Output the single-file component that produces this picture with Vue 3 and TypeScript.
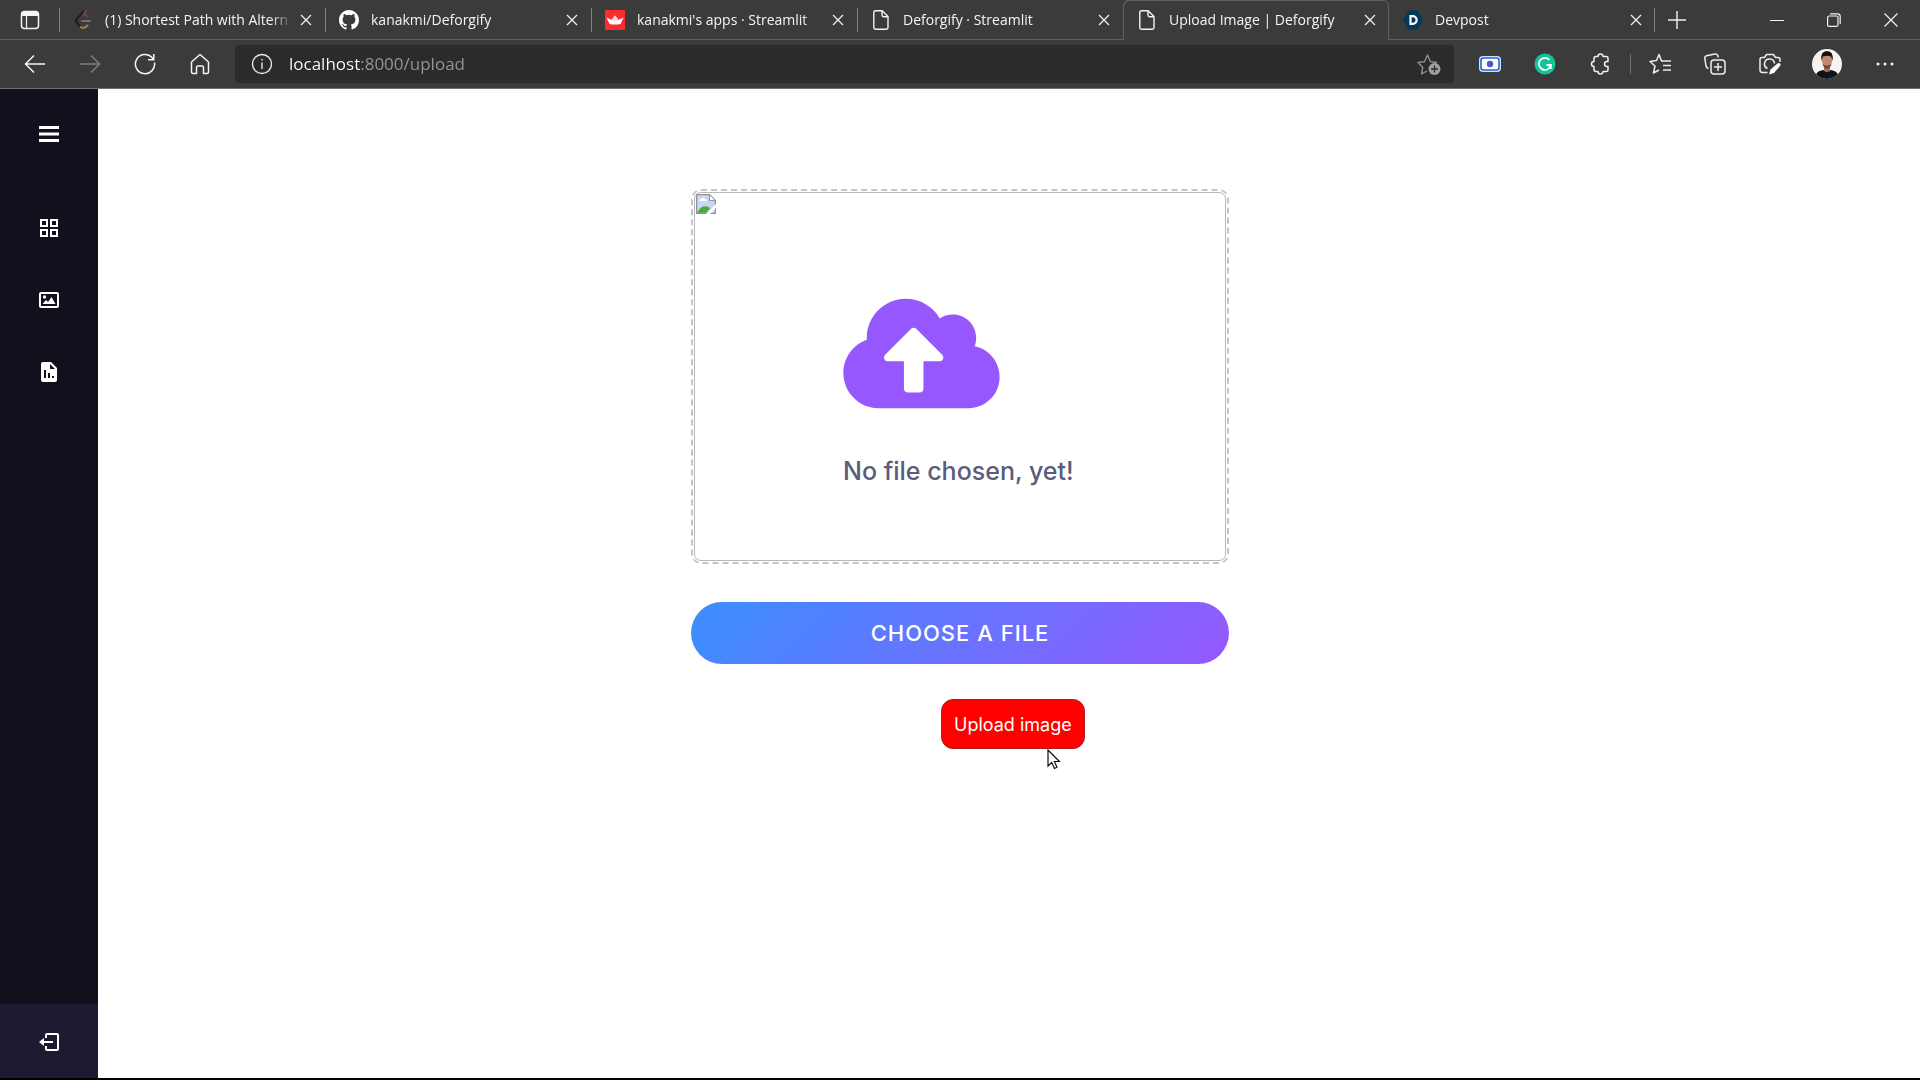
<script setup lang="ts">
interface Tab {
  title: string
  icon: 'leetcode' | 'github' | 'streamlit' | 'file' | 'devpost'
  active?: boolean
}

const tabs: Tab[] = [
  { title: '(1) Shortest Path with Altern', icon: 'leetcode' },
  { title: 'kanakmi/Deforgify', icon: 'github' },
  { title: "kanakmi's apps · Streamlit", icon: 'streamlit' },
  { title: 'Deforgify · Streamlit', icon: 'file' },
  { title: 'Upload Image | Deforgify', icon: 'file', active: true },
  { title: 'Devpost', icon: 'devpost' },
]
</script>

<template>
  <div class="window">
    <header class="browser">
      <div class="tabstrip">
        <button class="icon-btn tab-actions" aria-label="Tab actions">
          <svg width="20" height="20" viewBox="0 0 20 20" fill="none" stroke="#f4f4f4" stroke-width="1.500">
            <rect x="1.500" y="1.500" width="17" height="17" rx="3" />
            <path d="M2 4.500h16M3 3h14" stroke-width="3" />
            <path d="M6.500 6v12" stroke-width="1.200" />
          </svg>
        </button>
        <div v-for="tab in tabs" :key="tab.title" class="tab" :class="{ active: tab.active }">
          <svg v-if="tab.icon === 'leetcode'" class="favicon" viewBox="0 0 20 20" fill="none" stroke-width="2" stroke-linecap="round">
            <path d="M10.500 2 3.500 9Q2 10.500 3.500 12.500L7 16" stroke="#1d1d1d" />
            <path d="M10.500 5q2-1 4 1.500M13.500 1l-2.500 2.500" stroke="#744540" />
            <path d="M8 17q3 2.500 6.500-1.500" stroke="#a57f42" />
            <path d="M9 11h8" stroke="#707070" />
          </svg>
          <svg v-else-if="tab.icon === 'github'" class="favicon" viewBox="0 0 16 16" fill="#fff">
            <path d="M8 0C3.580 0 0 3.580 0 8c0 3.540 2.290 6.530 5.470 7.590.4.070.55-.17.55-.38 0-.19-.01-.82-.01-1.490-2.010.37-2.530-.49-2.690-.94-.09-.23-.48-.94-.82-1.130-.28-.15-.68-.52-.01-.53.63-.01 1.080.58 1.230.82.72 1.210 1.870.87 2.330.66.07-.52.28-.87.51-1.070-1.780-.2-3.640-.89-3.640-3.950 0-.87.31-1.590.82-2.150-.08-.2-.36-1.020.08-2.120 0 0 .67-.21 2.200.82a7.600 7.600 0 0 1 4 0c1.530-1.040 2.200-.82 2.200-.82.44 1.100.16 1.920.08 2.120.51.56.82 1.270.82 2.150 0 3.070-1.870 3.750-3.650 3.950.29.25.54.73.54 1.480 0 1.070-.01 1.930-.01 2.200 0 .21.15.46.55.38A8 8 0 0 0 16 8c0-4.420-3.580-8-8-8z" />
          </svg>
          <svg v-else-if="tab.icon === 'streamlit'" class="favicon" viewBox="0 0 20 20">
            <path d="M0 0h20v20H0z" fill="#fb2b2f" />
            <path d="m1.500 7.500 5 2.500L10 5.500l3.500 4.500 5-2.500-3 6.500q-5.500 1-11 0z" fill="#fff" />
            <path d="m6.500 10 3.500 1.600 3.500-1.600L10 5.500z" fill="#ffd9d9" />
          </svg>
          <svg v-else-if="tab.icon === 'file'" class="favicon" viewBox="0 0 20 20" fill="none" stroke="#f4f4f4" stroke-width="1.400" stroke-linejoin="round">
            <path d="M4.500.8h6.700L17 6.500v11q0 1.700-1.700 1.700H4.500q-1.700 0-1.700-1.700v-15Q2.800.8 4.500.8zM11 1v4q0 1.700 1.700 1.700H17" />
          </svg>
          <svg v-else class="favicon" viewBox="0 0 20 20">
            <path d="M5 .5h10l5 9.500-5 9.500H5L0 10z" fill="#023b57" />
            <path d="M7.500 6.200h2.300a3.800 3.800 0 0 1 0 7.600H7.500z" fill="none" stroke="#fff" stroke-width="2.200" />
          </svg>
          <button class="tab-title">{{ tab.title }}</button>
          <button class="icon-btn tab-close" aria-label="Close tab">
            <svg width="12" height="12" viewBox="0 0 12 12" stroke="#f0f0f0" stroke-width="1.300"><path d="m1 1 10 10M11 1 1 11" /></svg>
          </button>
        </div>
        <button class="icon-btn new-tab" aria-label="New tab">
          <svg width="20" height="20" viewBox="0 0 20 20" stroke="#f0f0f0" stroke-width="1.400"><path d="M10 1v18M1 10h18" /></svg>
        </button>
        <div class="window-controls">
          <button class="icon-btn" aria-label="Minimize">
            <svg width="14" height="14" viewBox="0 0 14 14" stroke="#f4f4f4"><path d="M0 7.500h14" /></svg>
          </button>
          <button class="icon-btn" aria-label="Restore">
            <svg width="14" height="14" viewBox="0 0 14 14" fill="none" stroke="#f4f4f4" stroke-width="1.200"><rect x=".6" y="3" width="10.400" height="10.400" rx="1.500" /><path d="M3 .8h7.500q2.700 0 2.700 2.700V11" /></svg>
          </button>
          <button class="icon-btn" aria-label="Close window">
            <svg width="14" height="14" viewBox="0 0 14 14" stroke="#f4f4f4" stroke-width="1.200"><path d="m.5.5 13 13M13.500.5l-13 13" /></svg>
          </button>
        </div>
      </div>

      <div class="toolbar">
        <nav class="nav-buttons">
          <button class="icon-btn" aria-label="Back">
            <svg width="22" height="22" viewBox="0 0 22 22" fill="none" stroke="#f4f4f4" stroke-width="1.500"><path d="M21 11H1.500M10 2.500 1.500 11l8.500 8.500" /></svg>
          </button>
          <button class="icon-btn" aria-label="Forward" disabled>
            <svg width="22" height="22" viewBox="0 0 22 22" fill="none" stroke="#7d7d7d" stroke-width="1.500"><path d="M1 11h19.500M12 2.500l8.500 8.500-8.500 8.500" /></svg>
          </button>
          <button class="icon-btn" aria-label="Refresh">
            <svg width="22" height="22" viewBox="0 0 22 22" fill="none" stroke="#f4f4f4" stroke-width="1.500"><path d="M20.500 9.500A9.600 9.600 0 1 1 18 4.500l1.500 2M19.800 1v5.700H14" /></svg>
          </button>
          <button class="icon-btn" aria-label="Home">
            <svg width="22" height="22" viewBox="0 0 22 22" fill="none" stroke="#f4f4f4" stroke-width="1.500" stroke-linejoin="round"><path d="m11 1.500 8.500 7.500v10q0 1.500-1.500 1.500h-3.500v-6q0-1.500-1.500-1.500H9q-1.500 0-1.500 1.500v6H4q-1.500 0-1.500-1.500V9z" /></svg>
          </button>
        </nav>
        <div class="address">
          <svg width="22" height="22" viewBox="0 0 22 22" fill="none" stroke="#e8e8e8" stroke-width="1.400"><circle cx="11" cy="11" r="9.500" /><path d="M11 9.500V16M11 6v1.600" /></svg>
          <input class="url" type="text" value="localhost:8000/upload" aria-label="Address" />
          <button class="icon-btn" aria-label="Add to favorites">
            <svg width="26" height="24" viewBox="0 0 26 24" fill="none" stroke="#969696" stroke-width="1.300" stroke-linejoin="round"><path d="m11 19-5.500 3 1.300-6.500L2 10.500l6.500-.8L11.500 3l3 6.700 6.500.8" /><circle cx="18.500" cy="17" r="6" fill="#a0a0a0" stroke="none" /><path d="M18.500 13.500v7M15 17h7" stroke="#2b2b2b" /></svg>
          </button>
        </div>
        <div class="extensions">
          <button class="icon-btn" aria-label="Screen recorder">
            <svg width="22" height="22" viewBox="0 0 22 22"><rect x="0" y="3" width="22" height="16" rx="4" fill="#cfe3fb" /><rect x="2" y="5" width="18" height="12" rx="2.500" fill="#fff" stroke="#2367d8" stroke-width="1.600" /><circle cx="11" cy="11" r="3.200" fill="#5654c8" /></svg>
          </button>
          <button class="icon-btn" aria-label="Grammarly">
            <svg width="22" height="22" viewBox="0 0 22 22" fill="none" stroke="#fff" stroke-width="1.800"><circle cx="11" cy="11" r="10.500" fill="#15c39a" stroke="none" /><path d="M15.500 7a6 6 0 1 0 1.300 5H12.500M16.800 12v4" /></svg>
          </button>
          <button class="icon-btn" aria-label="Extensions">
            <svg width="22" height="22" viewBox="0 0 22 22" fill="none" stroke="#ededed" stroke-width="1.500" stroke-linejoin="round"><path d="M7 3.500h2a2.500 2.500 0 0 1 5 0h3.500q1.500 0 1.500 1.500v3.500h-1a2.500 2.500 0 0 0 0 5h1V17q0 1.500-1.500 1.500H14a2.500 2.500 0 0 1-5 0H7q-2 0-2-2v-3a2.500 2.500 0 0 1 0-5v-3q0-2 2-2z" /></svg>
          </button>
        </div>
        <div class="tools">
          <button class="icon-btn" aria-label="Favorites">
            <svg width="22" height="22" viewBox="0 0 22 22" fill="none" stroke="#ededed" stroke-width="1.500" stroke-linejoin="round"><path d="M12.500 8 10 1.500 7.500 7.500 1 8.500l5 4.500-1.500 7 5.500-3M12 8h10M14 12.500h8M14 17h8" /></svg>
          </button>
          <button class="icon-btn" aria-label="Collections">
            <svg width="22" height="22" viewBox="0 0 22 22" fill="none" stroke="#ededed" stroke-width="1.500"><path d="M4.500 15.500Q2.500 15 2 13L.8 5.200q-.3-2 1.700-2.500L11 1q2.300-.3 3 2l.3 1.500" /><rect x="7" y="7" width="14" height="14" rx="3" /><path d="M14 10v8M10 14h8" /></svg>
          </button>
          <button class="icon-btn" aria-label="Web capture">
            <svg width="22" height="22" viewBox="0 0 22 22" fill="none" stroke="#ededed" stroke-width="1.500" stroke-linejoin="round"><path d="M8.500 19.500H3.500q-2.500 0-2.500-2.500V6.500q0-2 2-2h2.500l2-3h7l2 3H19q2 0 2 2V9M8.500 15.500a5 5 0 1 1 7-5" /><path d="m10 21.500 1.500-5 7-6q1.500-1 2.500 0t0 2.500l-6 7z" fill="#fff" stroke="none" /></svg>
          </button>
          <button class="icon-btn profile" aria-label="Profile">
            <svg width="30" height="30" viewBox="0 0 30 30"><clipPath id="avatar"><circle cx="15" cy="15" r="15" /></clipPath><g clip-path="url(#avatar)"><path d="M0 0h30v30H0z" fill="#f7f3f1" /><path d="M3 30q0-8 8-9l4 1.500 4-1.500q8 1 8 9z" fill="#10131c" /><path d="M12 16h6v6q-3 2-6 0z" fill="#a56e55" /><ellipse cx="15" cy="11.500" rx="5" ry="7.500" fill="#c18a6e" /><path d="M9.500 12Q8 2 15 2t5.500 10L19 7.500q-4-1.500-8 0z" fill="#17110f" /><path d="M10.500 15q1.500 4.500 4.500 4.500t4.500-4.500q-2 1.500-4.500 1.500T10.500 15z" fill="#6b4636" /></g></svg>
          </button>
          <button class="icon-btn" aria-label="Settings and more">
            <svg width="20" height="20" viewBox="0 0 20 20" fill="#f4f4f4"><circle cx="3" cy="10" r="1.500" /><circle cx="10" cy="10" r="1.500" /><circle cx="17" cy="10" r="1.500" /></svg>
          </button>
        </div>
      </div>
    </header>

    <div class="page">
      <aside class="sidebar">
        <button class="icon-btn menu" aria-label="Menu">
          <svg width="24" height="24" viewBox="0 0 24 24" fill="#fff"><path d="M2 4h20v3H2zM2 10.500h20v3H2zM2 17h20v3H2z" /></svg>
        </button>
        <nav class="links">
          <a href="#" aria-label="Dashboard">
            <svg width="24" height="24" viewBox="0 0 24 24" fill="none" stroke="#fff" stroke-width="2"><path d="M4 4h6v6H4zM14 4h6v6h-6zM4 14h6v6H4zM14 14h6v6h-6z" /></svg>
          </a>
          <a href="#" aria-label="Upload image">
            <svg width="24" height="24" viewBox="0 0 24 24" fill="#fff"><rect x="3" y="5" width="18" height="14" rx="1" fill="none" stroke="#fff" stroke-width="2" /><circle cx="7.500" cy="9" r="1.700" /><path d="m5.500 16 3.500-4 2 2 3.500-5 4 7z" /></svg>
          </a>
          <a href="#" aria-label="Report">
            <svg width="24" height="24" viewBox="0 0 24 24" fill="#fff"><path d="M6 2h8l6 6v12q0 2-2 2H6q-2 0-2-2V4q0-2 2-2z" /><path d="M13 4v5h5zM7 10h2v8H7zM11 13h2v5h-2zM15 16h2v2h-2z" fill="#11101d" /></svg>
          </a>
        </nav>
        <button class="icon-btn logout" aria-label="Log out">
          <svg width="24" height="24" viewBox="0 0 24 24" fill="none" stroke="#fff" stroke-width="2"><path d="M9 8V5q0-1 1-1h10q1 0 1 1v14q0 1-1 1H10q-1 0-1-1v-3M6 12h10" /><path d="m2 12 5-4v8z" fill="#fff" stroke="none" /></svg>
        </button>
      </aside>

      <main class="content">
        <div class="uploader">
          <div class="dropzone">
            <div class="preview">
              <svg class="broken" width="20" height="20" viewBox="0 0 20 20">
                <path d="M.6.600h13l5.800 5.800v13H.6z" fill="#c6d7f4" stroke="#929292" stroke-width="1.200" />
                <path d="M13.500.6v6h6z" fill="#fff" stroke="#929292" />
                <path d="M3 7q0-2 2-2 2-3 4 0 2 0 2 2z" fill="#fff" />
                <path d="M1.200 18.800q3-6 7-6.500 4-.5 6 2l-4 4.500z" fill="#55a53b" />
                <path d="m10 20 10-10v4l-6 6z" fill="#fff" />
              </svg>
              <div class="empty">
                <svg class="cloud" viewBox="0 0 640 512" fill="#9658fe">
                  <path d="M537.600 226.600c4.100-10.700 6.400-22.400 6.400-34.600 0-53-43-96-96-96-19.700 0-38.100 6-53.300 16.200C367 64.200 315.300 32 256 32c-88.400 0-160 71.600-160 160 0 2.700.1 5.400.2 8.100C40.200 219.800 0 273.200 0 336c0 79.500 64.500 144 144 144h368c70.700 0 128-57.300 128-128 0-61.900-44-113.600-102.400-125.400zM393.400 288H328v112c0 8.800-7.200 16-16 16h-48c-8.800 0-16-7.200-16-16V288h-65.400c-14.300 0-21.400-17.200-11.300-27.300l105.400-105.400c6.200-6.200 16.400-6.200 22.600 0l105.400 105.400c10.100 10.100 2.900 27.300-11.300 27.300z" />
                </svg>
                <p>No file chosen, yet!</p>
              </div>
            </div>
          </div>
          <button class="choose">CHOOSE A FILE</button>
          <div class="submit">
            <button class="upload">Upload image</button>
            <svg class="cursor" width="14" height="22" viewBox="0 0 14 22" fill="#fff" stroke="#111" stroke-width="1.200"><path d="M1 1v16l3.700-3.500 2.800 6 2.500-1.200-2.600-5.800h5z" /></svg>
          </div>
        </div>
      </main>
    </div>
  </div>
</template>

<style>
body {
  margin: 0;
  background: #fff;
}
</style>

<style scoped>
.window {
  display: flex;
  flex-direction: column;
  min-height: 100vh;
  box-sizing: border-box;
  border-bottom: 2px solid #000;
  font-family: Inter, "Liberation Sans", sans-serif;
}
button {
  margin: 0;
  padding: 0;
  border: 0;
  background: none;
  color: inherit;
  font: inherit;
}
.icon-btn {
  display: flex;
  align-items: center;
  justify-content: center;
  flex-shrink: 0;
}

.browser {
  background: #3b3b3b;
  color: #f4f4f4;
  font-family: "Open Sans", "Noto Sans", sans-serif;
  border-bottom: 1px solid #707070;
}
.tabstrip {
  display: flex;
  height: 40px;
  box-shadow: inset 0 -1px #606060;
}
.tab-actions {
  width: 59px;
}
.tab {
  display: flex;
  align-items: center;
  flex: 0 1 266px;
  min-width: 0;
  box-sizing: border-box;
  padding: 0 13px 0 14px;
  background: linear-gradient(#808080, #808080) left 8px / 1px 24px no-repeat;
}
.tab.active {
  background: #3b3b3b;
  border-radius: 6px 6px 0 0;
  box-shadow: inset 1px 1px #606060, inset -1px 0 #606060;
}
.tab.active + .tab {
  background: linear-gradient(#808080, #808080) right 8px / 1px 24px no-repeat;
}
.favicon {
  width: 20px;
  height: 20px;
  flex-shrink: 0;
}
.tab-title {
  flex: 1;
  min-width: 0;
  margin: 0 6px 0 12px;
  overflow: hidden;
  white-space: nowrap;
  text-align: left;
  font-size: 14px;
  line-height: 24px;
  mask-image: linear-gradient(to left, transparent, #000 24px);
}
.tab-close {
  width: 12px;
  height: 20px;
}
.new-tab {
  width: 44px;
}
.window-controls {
  display: flex;
  margin-left: auto;
  padding-right: 1px;
}
.window-controls .icon-btn {
  width: 57px;
}

.toolbar {
  display: flex;
  align-items: center;
  height: 48px;
}
.nav-buttons {
  display: flex;
  padding: 0 8px 0 7px;
}
.nav-buttons .icon-btn,
.extensions .icon-btn,
.tools .icon-btn {
  width: 55px;
  height: 38px;
}
.address {
  display: flex;
  align-items: center;
  flex: 1;
  height: 38px;
  box-sizing: border-box;
  padding: 0 12px 0 16px;
  border-radius: 4px;
  background: #2b2b2b;
}
.url {
  flex: 1;
  min-width: 0;
  margin: 0 16px;
  padding: 0;
  border: 0;
  outline: 0;
  background: linear-gradient(to right, #fff 72px, #979797 72px);
  background-clip: text;
  color: transparent;
  font: 17px/24px "Open Sans", "Noto Sans", sans-serif;
}
.extensions {
  display: flex;
  padding: 0 3px 0 8px;
}
.tools {
  display: flex;
  padding: 0 8px 0 2px;
  background: linear-gradient(#707070, #707070) left / 1px 20px no-repeat;
}
.tools .profile {
  width: 60px;
}

.page {
  display: flex;
  flex: 1;
}
.sidebar {
  display: flex;
  flex-direction: column;
  width: 98px;
  flex-shrink: 0;
  background: #11101d;
}
.menu {
  height: 90px;
}
.links {
  display: flex;
  flex-direction: column;
  padding-top: 13px;
}
.links a {
  display: flex;
  align-items: center;
  justify-content: center;
  height: 72px;
}
.logout {
  height: 74px;
  box-sizing: border-box;
  margin-top: auto;
  padding-top: 2px;
  background: #1d1b31;
}

.content {
  flex: 1;
  padding: 100px 98px 40px 0;
}
.uploader {
  max-width: 538px;
  margin: 0 auto;
}
.dropzone {
  height: 375px;
  box-sizing: border-box;
  padding: 1px;
  border: 2px dashed #c4c4cc;
  border-radius: 10px;
}
.preview {
  position: relative;
  display: flex;
  align-items: center;
  justify-content: center;
  height: 100%;
  box-sizing: border-box;
  border: 1px solid #b8b8b8;
  border-radius: 7px;
}
.broken {
  position: absolute;
  top: 1px;
  left: 1px;
}
.empty {
  width: 234px;
  padding-top: 28px;
  color: #5b5b7b;
}
.cloud {
  display: block;
  width: 157px;
  height: 125px;
}
.empty p {
  margin: 36px 0 0;
  font-size: 25px;
  font-weight: 500;
  line-height: 38px;
  white-space: nowrap;
}
.choose {
  display: block;
  width: 100%;
  height: 62px;
  margin-top: 38px;
  border-radius: 31px;
  background: linear-gradient(135deg, #3a8ffe 0%, #9658fe 100%);
  color: #fff;
  font-size: 22px;
  font-weight: 500;
  letter-spacing: 1px;
}
.submit {
  position: relative;
  width: max-content;
  margin: 35px 0 0 250px;
}
.upload {
  height: 50px;
  padding: 0 12px;
  border: 1px solid #a92020;
  border-radius: 12px;
  background: #f00;
  color: #fff;
  font-size: 18px;
}
.cursor {
  position: absolute;
  top: 50px;
  left: 106px;
}
</style>
